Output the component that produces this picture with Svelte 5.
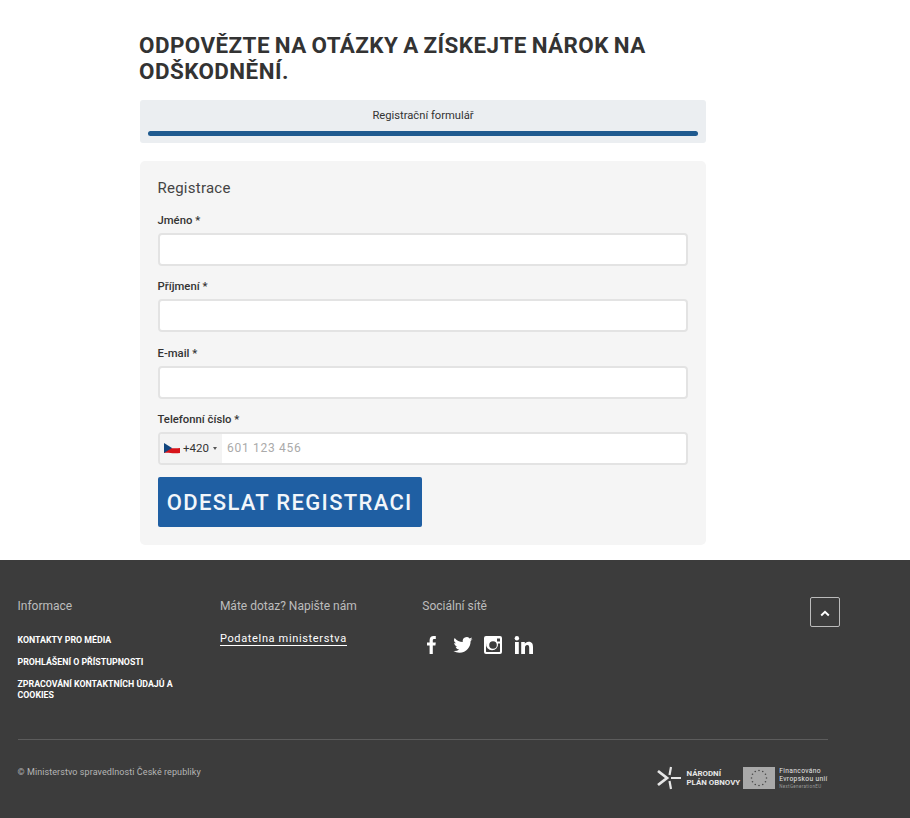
<script lang="ts">
  const fields = ['Jméno *', 'Příjmení *', 'E-mail *'];
  const links = ['Kontakty pro média', 'Prohlášení o přístupnosti', 'Zpracování kontaktních údajů a cookies'];
  const stars = Array.from({ length: 12 }, (_, i) => {
    const a = (i * Math.PI) / 6;
    return { x: 16 + Math.cos(a) * 7.5, y: 11 + Math.sin(a) * 7.5 };
  });
</script>

<main class="content">
  <h1>Odpovězte na otázky a získejte nárok na odškodnění.</h1>

  <div class="progress-box">
    <div class="progress-label">Registrační formulář</div>
    <div class="progress-bar"></div>
  </div>

  <form class="card">
    <h2>Registrace</h2>
    {#each fields as field}
      <label class="field">
        <span>{field}</span>
        <input type="text" />
      </label>
    {/each}
    <label class="field">
      <span>Telefonní číslo *</span>
      <div class="phone">
        <div class="dial">
          <svg width="16" height="12" viewBox="0 0 16 12">
            <path d="M0 1C4 0 8 2 16 1V6C8 7 4 5 0 6Z" fill="#f2f2f2" />
            <path d="M0 6C4 5 8 7 16 6V11C8 12 4 10 0 11Z" fill="#d7141a" />
            <path d="M0 1L8 6L0 11Z" fill="#11457e" />
          </svg>
          <span class="code">+420</span>
          <i class="caret"></i>
        </div>
        <input type="text" placeholder="601 123 456" />
      </div>
    </label>
    <button type="button" class="submit">Odeslat registraci</button>
  </form>
</main>

<footer>
  <div class="columns">
    <section class="col">
      <h3>Informace</h3>
      <ul>
        {#each links as link}
          <li>{link}</li>
        {/each}
      </ul>
    </section>
    <section class="col">
      <h3>Máte dotaz? Napište nám</h3>
      <a class="mail" href="#top">Podatelna ministerstva</a>
    </section>
    <section class="col">
      <h3>Sociální sítě</h3>
      <div class="social">
        <svg width="20" height="20" viewBox="0 0 20 20" fill="#fff">
          <path d="M7.6 19V10.6H5V7.4h2.6V5.2C7.6 2.5 9.1 1 11.6 1c1 0 1.9.1 2.2.1v2.9h-1.5c-1.2 0-1.5.6-1.5 1.5v1.9h3l-.4 3.2h-2.6V19Z" />
        </svg>
        <svg width="20" height="20" viewBox="0 0 24 24" fill="#fff">
          <path d="M23.5 4.9c-.8.4-1.8.6-2.7.8 1-.6 1.7-1.5 2.1-2.6-.9.5-1.9.9-3 1.1a4.7 4.7 0 0 0-8.1 4.3C7.9 8.3 4.400 6.400 2 3.500a4.700 4.700 0 0 0 1.500 6.300c-.8 0-1.500-.2-2.100-.6v.1c0 2.300 1.600 4.200 3.800 4.600-.7.200-1.400.200-2.100.100.600 1.900 2.300 3.200 4.400 3.300A9.500 9.500 0 0 1 .5 19.200 13.400 13.400 0 0 0 7.700 21.300c8.700 0 13.400-7.200 13.400-13.400v-.6c.9-.6 1.700-1.500 2.400-2.400Z" />
        </svg>
        <svg width="20" height="20" viewBox="0 0 20 20">
          <path fill="#fff" fill-rule="evenodd" d="M3 1h14a2 2 0 0 1 2 2v14a2 2 0 0 1-2 2H3a2 2 0 0 1-2-2V3a2 2 0 0 1 2-2Zm0 7.500V16.500c0 .3.200.5.500.5h13c.3 0 .5-.2.500-.5V8.500h-2a6 6 0 1 1-11.900 0Zm7-2.300a3.800 3.800 0 1 0 0 7.600 3.800 3.800 0 0 0 0-7.600ZM14 3.500v3h3v-3Z" />
        </svg>
        <svg width="20" height="20" viewBox="0 0 20 20" fill="#fff">
          <rect x="1" y="7" width="3.800" height="12" />
          <circle cx="2.900" cy="3.200" r="2.200" />
          <path d="M7.200 7h3.600v1.700c.6-1 1.900-2 3.800-2 3.600 0 4.400 2.300 4.400 5.400V19h-3.800v-6.100c0-1.500-.1-3-1.900-3-1.900 0-2.300 1.400-2.300 2.900V19H7.200Z" />
        </svg>
      </div>
    </section>
    <button type="button" class="to-top" aria-label="Nahoru">
      <svg width="10" height="7" viewBox="0 0 10 7">
        <path d="M1.200 5.500L5 1.800L8.800 5.500" fill="none" stroke="#fff" stroke-width="2" />
      </svg>
    </button>
  </div>

  <div class="bottom">
    <span class="copy">© Ministerstvo spravedlnosti České republiky</span>
    <div class="logos">
      <svg width="24" height="24" viewBox="0 0 24 24" stroke="#e6e6e6" stroke-width="2.800" fill="none">
        <path d="M1 5L10 12L1 19" />
        <path d="M14 12H24M12.500 9L14 1M12.500 15L14 23" stroke-width="2.200" />
      </svg>
      <div class="npo">Národní<br />plán obnovy</div>
      <svg width="32" height="22" viewBox="0 0 32 22">
        <rect width="32" height="22" fill="#a9a9a9" />
        {#each stars as s}
          <circle cx={s.x} cy={s.y} r="0.800" fill="#4a4a4a" />
        {/each}
      </svg>
      <div class="eu">
        Financováno<br />Evropskou unií
        <small>NextGenerationEU</small>
      </div>
    </div>
  </div>
</footer>

<style>
  :global(body) {
    margin: 0;
    background: #fff;
    font-family: Roboto, 'Liberation Sans', sans-serif;
  }

  .content {
    width: 566px;
    margin-left: 140px;
    padding-top: 32px;
    padding-bottom: 15px;
  }

  h1 {
    margin: 0 0 16px -1px;
    font-size: 22.400px;
    line-height: 26px;
    font-weight: 700;
    letter-spacing: 0.45px;
    word-spacing: -1.200px;
    text-transform: uppercase;
    color: #333;
  }

  .progress-box {
    height: 43px;
    box-sizing: border-box;
    padding: 0 8px;
    background: #ebeef1;
    border-radius: 3px;
    margin-bottom: 18px;
  }

  .progress-label {
    height: 31px;
    line-height: 31px;
    text-align: center;
    font-size: 11.200px;
    color: #333;
  }

  .progress-bar {
    height: 5px;
    background: #1f5a8f;
    border-radius: 3px;
  }

  .card {
    box-sizing: border-box;
    height: 384px;
    padding: 18px 18px 18px 17.500px;
    background: #f5f5f5;
    border-radius: 5px;
  }

  h2 {
    margin: 0 0 13px;
    font-size: 15px;
    line-height: 18px;
    font-weight: 400;
    letter-spacing: 0.25px;
    color: #444;
  }

  .field {
    display: block;
    margin-bottom: 10.330px;
  }

  .field > span {
    display: block;
    height: 20px;
    margin-bottom: 3px;
    font-size: 11.300px;
    line-height: 22px;
    font-weight: 500;
    color: #333;
  }

  input {
    display: block;
    width: 100%;
    height: 33px;
    box-sizing: border-box;
    border: 2px solid #e3e3e3;
    border-radius: 4px;
    background: #fff;
    font-family: inherit;
    font-size: 12px;
    letter-spacing: 0.7px;
    outline: none;
  }

  .phone {
    display: flex;
    height: 33px;
    box-sizing: border-box;
    border: 2px solid #e3e3e3;
    border-radius: 4px;
    background: #fff;
    overflow: hidden;
  }

  .phone input {
    flex: 1;
    height: 29px;
    border: 0;
    padding: 0 5px;
  }

  .phone input::placeholder {
    color: #aaa;
  }

  .dial {
    display: flex;
    align-items: center;
    width: 62.500px;
    padding-left: 4.500px;
    box-sizing: border-box;
    background: #f3f3f3;
  }

  .code {
    margin-left: 3px;
    font-size: 11.500px;
    color: #333;
  }

  .caret {
    margin-left: 4px;
    border-left: 2.500px solid transparent;
    border-right: 2.500px solid transparent;
    border-top: 3px solid #555;
  }

  .submit {
    display: block;
    width: 264.500px;
    height: 50px;
    margin-top: 12px;
    padding: 1px 0 0;
    border: 0;
    border-radius: 2px;
    background: #1f5fa3;
    color: #f2f6fa;
    font-family: inherit;
    font-size: 22px;
    font-weight: 500;
    letter-spacing: 1.320px;
    text-transform: uppercase;
    white-space: nowrap;
  }

  footer {
    height: 258px;
    box-sizing: border-box;
    padding: 38px 82.500px 0 17.500px;
    background: #3c3c3c;
  }

  .columns {
    position: relative;
    display: flex;
    height: 141px;
    border-bottom: 1px solid #5c5c5c;
  }

  .col {
    width: 202.400px;
  }

  .col h3 {
    margin: 0 0 18px;
    font-size: 12px;
    line-height: 16px;
    font-weight: 400;
    color: #bdbdbd;
  }

  ul {
    margin: 0;
    padding: 0;
    width: 175px;
    padding-top: 2.500px;
    list-style: none;
  }

  li {
    margin-bottom: 11.300px;
    font-size: 8.800px;
    line-height: 11px;
    font-weight: 700;
    text-transform: uppercase;
    color: #fff;
  }

  .mail {
    display: block;
    width: fit-content;
    font-size: 11px;
    line-height: 13px;
    letter-spacing: 0.65px;
    color: #fff;
    text-decoration: none;
    border-bottom: 1px solid #fff;
  }

  .social {
    display: flex;
    gap: 10.500px;
    margin-top: 21px;
  }

  .to-top {
    position: absolute;
    top: -1px;
    left: 792px;
    width: 30px;
    height: 30px;
    padding: 0;
    background: transparent;
    border: 1px solid #bbb;
    border-radius: 2px;
  }

  .bottom {
    display: flex;
    justify-content: space-between;
    align-items: center;
    padding-top: 26px;
  }

  .copy {
    font-size: 9px;
    color: #b5b5b5;
    letter-spacing: 0.08px;
    margin-top: -12px;
  }

  .logos {
    display: flex;
    align-items: center;
    color: #e6e6e6;
  }

  .npo {
    margin: 0 3px 0 6px;
    font-size: 7.900px;
    line-height: 9px;
    font-weight: 700;
    text-transform: uppercase;
  }

  .eu {
    margin-left: 4px;
    font-size: 6.700px;
    line-height: 8px;
    letter-spacing: 0.35px;
  }

  .eu small {
    display: block;
    font-size: 4.500px;
    line-height: 7px;
    color: #999;
  }
</style>
